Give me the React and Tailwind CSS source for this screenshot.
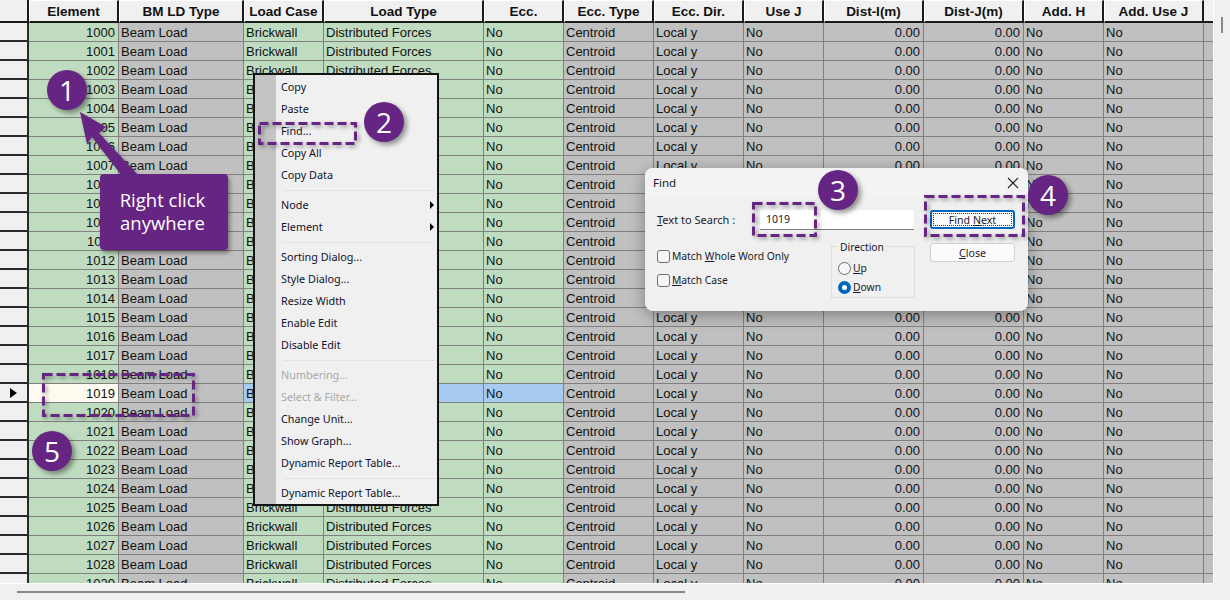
const cols = [
  { w: 90, h: 'Element' }, { w: 125, h: 'BM LD Type' }, { w: 80, h: 'Load Case' }, { w: 160, h: 'Load Type' },
  { w: 80, h: 'Ecc.' }, { w: 90, h: 'Ecc. Type' }, { w: 90, h: 'Ecc. Dir.' }, { w: 80, h: 'Use J' },
  { w: 100, h: 'Dist-I(m)' }, { w: 100, h: 'Dist-J(m)' }, { w: 80, h: 'Add. H' }, { w: 100, h: 'Add. Use J' },
];

const gridCols = 'grid grid-cols-[29px_90px_125px_80px_160px_80px_90px_90px_80px_100px_100px_80px_100px_10px]';

const rows = Array.from({ length: 30 }, (_, i) => 1000 + i);

function Cell({ bg, right, children }) {
  return (
    <div className={`h-[19px] border-r border-b border-[#808080] text-[13px] leading-[19px] whitespace-nowrap overflow-hidden ${bg} ${right ? 'text-right pl-[2px] pr-[3px]' : 'px-[2px]'}`}>
      {children}
    </div>
  );
}

function Row({ n }) {
  const sel = n === 1019;
  const green = sel ? 'bg-[#a6caf0]' : 'bg-[#c0dcc0]';
  const gray = 'bg-[#c0c0c0]';
  return (
    <div className={gridCols}>
      <div className="h-[19px] bg-[#f0f0f0] border-r-2 border-b-2 border-[#2a2a2a] flex items-center justify-center">
        {sel && <div className="w-0 h-0 border-y-[5px] border-y-transparent border-l-[7px] border-l-black" />}
      </div>
      <Cell bg={sel ? 'bg-[#fffbf0]' : 'bg-[#c0dcc0]'} right>{n}</Cell>
      <Cell bg={gray}>Beam Load</Cell>
      <Cell bg={green}>Brickwall</Cell>
      <Cell bg={green}>Distributed Forces</Cell>
      <Cell bg={green}>No</Cell>
      <Cell bg={gray}>Centroid</Cell>
      <Cell bg={gray}>Local y</Cell>
      <Cell bg={gray}>No</Cell>
      <Cell bg={gray} right>0.00</Cell>
      <Cell bg={gray} right>0.00</Cell>
      <Cell bg={gray}>No</Cell>
      <Cell bg={gray}>No</Cell>
      <Cell bg={gray} />
    </div>
  );
}

function Header() {
  return (
    <div className={gridCols}>
      <div className="h-[23px] bg-[#f0f0f0] border-r-2 border-b-2 border-[#1a1a1a]" />
      {cols.map((c) => (
        <div key={c.h} className="h-[23px] bg-[#f0f0f0] border-t border-l border-white border-r-2 border-r-[#1a1a1a] border-b-2 border-b-[#1a1a1a] text-center text-[13.5px] font-bold leading-[22px] whitespace-nowrap overflow-hidden">
          {c.h}
        </div>
      ))}
      <div className="h-[23px] bg-[#f0f0f0] border-b-2 border-[#1a1a1a]" />
    </div>
  );
}

const menu = [
  ['Copy'], ['Paste'], ['Find...'], ['Copy All'], ['Copy Data'], 'sep',
  ['Node', 'sub'], ['Element', 'sub'], 'sep',
  ['Sorting Dialog...'], ['Style Dialog...'], ['Resize Width'], ['Enable Edit'], ['Disable Edit'], 'sep',
  ['Numbering...', 'off'], ['Select & Filter...', 'off'], ['Change Unit...'], ['Show Graph...'], ['Dynamic Report Table...'], 'sep',
  ['Dynamic Report Table...'],
];

function ContextMenu() {
  return (
    <div className="absolute left-[253px] top-[73px] w-[186px] h-[433px] border-2 border-[#141414] bg-[#f0f0f0] py-px flex font-['Noto_Sans',sans-serif] text-[10.8px] text-[#10102a]">
      <div className="w-[21px] bg-[#c4c4c4] -my-px shrink-0" />
      <div className="flex-1 min-w-0">
        {menu.map((m, i) =>
          m === 'sep' ? (
            <div key={i} className="h-[8px] flex items-center pl-[7px] pr-[2px]">
              <div className="h-px w-full bg-[#e2e2e2]" />
            </div>
          ) : (
            <div key={i} className={`h-[22px] leading-[22px] pl-[5px] pr-[3px] flex items-center justify-between whitespace-nowrap ${m[1] === 'off' ? 'text-[#a8a8a8]' : ''}`}>
              <span>{m[0]}</span>
              {m[1] === 'sub' && <span className="w-0 h-0 border-y-[4px] border-y-transparent border-l-[4px] border-l-black" />}
            </div>
          )
        )}
      </div>
    </div>
  );
}

function Badge({ n, cls }) {
  return (
    <div className={`absolute w-[40px] h-[40px] rounded-full bg-[#662483] text-white text-[28px] leading-[40px] text-center font-['Open_Sans',sans-serif] shadow-[3px_3px_5px_rgba(0,0,0,0.4)] ${cls}`}>
      {n}
    </div>
  );
}

function Dash({ cls, w, h }) {
  return (
    <svg className={`absolute drop-shadow-[2px_2px_2px_rgba(0,0,0,0.4)] ${cls}`} width={w} height={h}>
      <rect x="1.5" y="1.5" width={w - 3} height={h - 3} fill="none" stroke="#662483" strokeWidth="3" strokeDasharray="9 4" />
    </svg>
  );
}

function U({ children }) {
  return <span className="underline underline-offset-1">{children}</span>;
}

function Check({ cls, children }) {
  return (
    <div className={`absolute left-[12px] flex items-center gap-[2px] text-[10.3px] ${cls}`}>
      <div className="w-[13px] h-[13px] rounded-[3px] border border-[#6e6e6e] bg-[#f6f6f6]" />
      <span>{children}</span>
    </div>
  );
}

function FindDialog() {
  return (
    <div className="absolute left-[645px] top-[168px] w-[383px] h-[143px] rounded-[8px] bg-[#f0f0f0] shadow-[0_4px_16px_rgba(0,0,0,0.35)] font-['Noto_Sans',sans-serif] text-[11px] text-[#1a1a2a]">
      <div className="flex items-center justify-between pl-[8px] pr-[8px] h-[30px] bg-[#f3f3f3] rounded-t-[8px]">
        <span className="text-[11.5px]">Find</span>
        <svg width="12" height="12" viewBox="0 0 12 12" className="mr-[1px]">
          <path d="M1 1 L11 11 M11 1 L1 11" stroke="#222" strokeWidth="1.1" fill="none" />
        </svg>
      </div>
      <div className="absolute left-[12px] top-[44px] leading-[16px]"><U>T</U>ext to Search :</div>
      <div className="absolute left-[115px] top-[42px] w-[154px] h-[20px] bg-white border-b border-[#808080] pl-[6px] leading-[19px] text-[10.5px]">1019</div>
      <div className="absolute left-[285px] top-[42px] w-[85px] h-[19px] rounded-[3px] border-2 border-[#0067c0] bg-[#fdfdfd] flex items-center justify-center p-px">
        <div className="w-full h-full border border-dotted border-[#333] flex items-center justify-center leading-none text-[10.6px] pt-px"><span>Find&nbsp;<span className="underline underline-offset-1">N</span>ext</span></div>
      </div>
      <div className="absolute left-[285px] top-[75px] w-[85px] h-[19px] rounded-[3px] border border-[#d0d0d0] bg-[#fbfbfb] flex items-center justify-center leading-none text-[10.6px] pt-px"><span><U>C</U>lose</span></div>
      <Check cls="top-[81px]">Match <U>W</U>hole Word Only</Check>
      <Check cls="top-[105px]"><U>M</U>atch Case</Check>
      <div className="absolute left-[186px] top-[78px] w-[84px] h-[52px] border border-[#dcdcdc] text-[10.3px]">
        <span className="absolute left-[6px] -top-[7px] bg-[#f0f0f0] px-[2px] leading-[14px]">Direction</span>
        <div className="absolute left-[6px] top-[14px] flex items-center gap-[2px]">
          <div className="w-[13px] h-[13px] rounded-full border border-[#6e6e6e] bg-[#f6f6f6]" />
          <span><U>U</U>p</span>
        </div>
        <div className="absolute left-[6px] top-[33px] flex items-center gap-[2px]">
          <div className="w-[13px] h-[13px] rounded-full bg-[#0067c0] flex items-center justify-center">
            <div className="w-[5px] h-[5px] rounded-full bg-white" />
          </div>
          <span><U>D</U>own</span>
        </div>
      </div>
    </div>
  );
}

export default function App() {
  return (
    <div className="relative w-[1230px] h-[600px] bg-[#f0f0f0] overflow-hidden font-['Liberation_Sans',Arial,sans-serif] text-[#111]">
      <div className="w-[1214px] h-[584px] overflow-hidden border-r border-b border-white">
        <Header />
        {rows.map((n) => <Row key={n} n={n} />)}
      </div>

      <div className="absolute left-[17px] top-[591px] w-[668px] h-[2px] bg-[#8a8a8a]" />
      <div className="absolute left-[1221px] top-[17px] w-[2px] h-[16px] bg-[#8a8a8a]" />

      <ContextMenu />
      <FindDialog />

      <Dash cls="left-[258px] top-[122px]" w={99} h={23} />
      <Dash cls="left-[752px] top-[202px]" w={65} h={35} />
      <Dash cls="left-[924px] top-[195px]" w={101} h={42} />
      <Dash cls="left-[42px] top-[373px]" w={153} h={44} />

      <svg className="absolute left-[70px] top-[100px] drop-shadow-[2px_2px_2px_rgba(0,0,0,0.3)]" width="80" height="90" viewBox="70 100 80 90">
        <polygon points="80,112 106,127 99,133 139,176 122,176 92,137 87,144" fill="#662483" />
      </svg>
      <div className="absolute left-[100px] top-[174px] w-[128px] h-[76px] rounded-[4px] bg-[#662483] shadow-[2px_3px_4px_rgba(0,0,0,0.4)] text-white text-[18.5px] leading-[23px] flex items-center justify-center text-center font-['Open_Sans',sans-serif] pb-[2px] pr-[3px]">
        <span>Right click<br />anywhere</span>
      </div>

      <Badge n="1" cls="left-[47px] top-[70px]" />
      <Badge n="2" cls="left-[364px] top-[102px]" />
      <Badge n="3" cls="left-[818px] top-[170px]" />
      <Badge n="4" cls="left-[1028px] top-[175px]" />
      <Badge n="5" cls="left-[32px] top-[431px]" />
    </div>
  );
}
